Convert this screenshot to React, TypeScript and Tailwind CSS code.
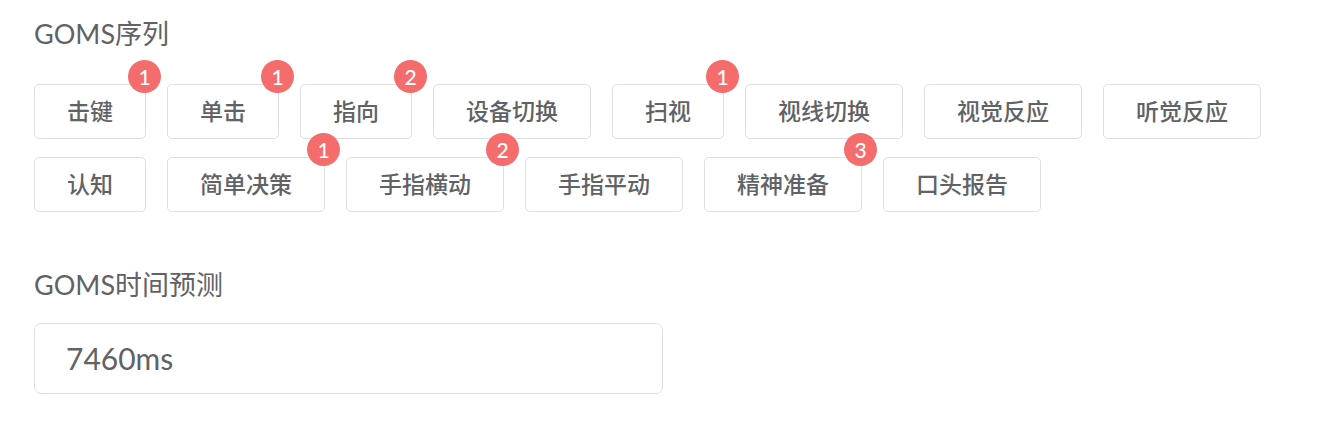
import React from 'react'

// GOMS operators with a count badge where the operator was used
const OPERATORS: { name: string; count?: number }[] = [
  { name: '击键', count: 1 },
  { name: '单击', count: 1 },
  { name: '指向', count: 2 },
  { name: '设备切换' },
  { name: '扫视', count: 1 },
  { name: '视线切换' },
  { name: '视觉反应' },
  { name: '听觉反应' },
  { name: '认知' },
  { name: '简单决策', count: 1 },
  { name: '手指横动', count: 2 },
  { name: '手指平动' },
  { name: '精神准备', count: 3 },
  { name: '口头报告' },
]

const FONT = { fontFamily: 'Lato, "Noto Sans CJK SC", sans-serif' }

function OperatorButton({ name, count }: { name: string; count?: number }) {
  return (
    <div className="relative">
      <button className="h-[55px] px-8 border border-[#dcdfe6] rounded-[5px] bg-white text-[23px] font-medium text-[#606266] leading-none flex items-center">
        {name}
      </button>
      {count !== undefined && (
        <span className="absolute top-[-24px] left-[calc(100%-18px)] h-[33px] min-w-[33px] px-[10px] rounded-full bg-[#f56c6c] text-white text-[21px] font-medium leading-none flex items-center justify-center">
          {count}
        </span>
      )}
    </div>
  )
}

export default function App() {
  return (
    <div className="bg-white min-h-screen px-[34px] pt-4 flex flex-col items-start" style={FONT}>
      <div className="text-[27px] leading-[36px] text-[#606266]">GOMS序列</div>

      <div className="mt-8 flex flex-wrap gap-x-[21px] gap-y-[18px]">
        {OPERATORS.map((op) => (
          <OperatorButton key={op.name} name={op.name} count={op.count} />
        ))}
      </div>

      <div className="mt-[55px] text-[27px] leading-[36px] text-[#606266]">GOMS时间预测</div>

      <div className="mt-5 w-[629px] h-[71px] border border-[#dcdfe6] rounded-[7px] pl-[31px] flex items-center text-[30px] text-[#606266]">
        7460ms
      </div>
    </div>
  )
}
